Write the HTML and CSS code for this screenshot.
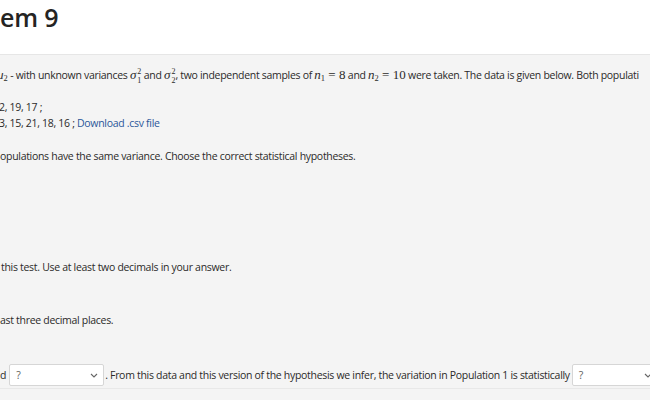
FILE: index.html
```html
<!DOCTYPE html>
<html lang="en">
<head>
    <meta charset="UTF-8">
    <title>Item 9</title>
    <link rel="stylesheet" href="styles.css">
</head>
<body>
    <div class="page-header">
        <h1 class="item-title">em 9</h1>
    </div>

    <div class="question">
        <p class="intro"><span class="math cut"><i>μ</i><sub>2</sub></span> - with unknown variances <span class="math"><i>σ</i><span class="ss"><span>2</span><span>1</span></span></span> and <span class="math"><i>σ</i><span class="ss"><span>2</span><span>2</span></span></span>, two independent samples of <span class="math"><i>n</i><sub>1</sub> = 8</span> and <span class="math"><i>n</i><sub>2</sub> = 10</span> were taken. The data is given below. Both populati</p>

        <p class="data">
            2, 19, 17 ;<br>
            3, 15, 21, 18, 16 ; <a href="#">Download .csv file</a>
        </p>

        <p class="part part-a">opulations have the same variance. Choose the correct statistical hypotheses.</p>

        <p class="part part-b">this test. Use at least two decimals in your answer.</p>

        <p class="part part-c">ast three decimal places.</p>

        <div class="answer-row">
            <span>d</span>
            <div class="select">
                <span>?</span>
                <svg width="8" height="5" viewBox="0 0 8 5"><path d="M1 1 L4 4 L7 1" fill="none" stroke="#666" stroke-width="1.1"/></svg>
            </div>
            <span>. From this data and this version of the hypothesis we infer, the variation in Population 1 is statistically</span>
            <div class="select select-last">
                <span>?</span>
                <svg width="8" height="5" viewBox="0 0 8 5"><path d="M1 1 L4 4 L7 1" fill="none" stroke="#666" stroke-width="1.1"/></svg>
            </div>
        </div>
    </div>
</body>
</html>
```

FILE: styles.css
```css
body {
    margin: 0;
    overflow: hidden;
    background-color: #f4f4f4;
    font-family: 'Open Sans', 'Noto Sans', sans-serif;
    font-size: 10.5px;
    letter-spacing: -0.3px;
    color: #2b2a29;
}
.page-header {
    background-color: #fff;
    height: 54px;
    border-bottom: 1px solid #e6e6e6;
}
.item-title {
    margin: 0;
    padding-top: 1px;
    font-size: 25px;
    font-weight: 600;
    line-height: 32px;
    letter-spacing: -0.2px;
    color: #252423;
}
.question {
    padding-top: 12px;
}
.question p {
    margin: 0;
    line-height: 16px;
    white-space: nowrap;
}
.intro {
    margin-left: -3px !important;
}
.math {
    font-family: 'Liberation Serif', serif;
    font-size: 13px;
    letter-spacing: 0;
}
.math sub {
    font-size: 8.5px;
    vertical-align: -2px;
    line-height: 0;
}
.ss {
    display: inline-flex;
    flex-direction: column;
    vertical-align: middle;
    font-size: 8px;
    line-height: 9px;
    margin-left: 1px;
}
.data {
    margin-top: 14px !important;
    margin-left: -1px !important;
}
.data a {
    color: #2b579a;
    text-decoration: none;
}
.part-a {
    margin-top: 17px !important;
}
.part-b {
    margin-top: 95px !important;
    margin-left: 1px !important;
}
.part-c {
    margin-top: 37px !important;
}
.answer-row {
    display: flex;
    align-items: center;
    height: 24px;
    margin-top: 35px;
    white-space: nowrap;
    border-bottom: 1px solid #e8e8e8;
    padding-bottom: 1px;
}
.select {
    display: flex;
    align-items: center;
    justify-content: space-between;
    box-sizing: border-box;
    width: 95px;
    height: 22px;
    margin: 0 1px 0 3px;
    padding: 0 5px 0 6px;
    background-color: #fff;
    border: 1px solid #d6d6d6;
    border-radius: 2px;
    flex-shrink: 0;
    color: #605e5c;
}
.select-last {
    width: 86px;
    margin-left: 2px;
}
```
